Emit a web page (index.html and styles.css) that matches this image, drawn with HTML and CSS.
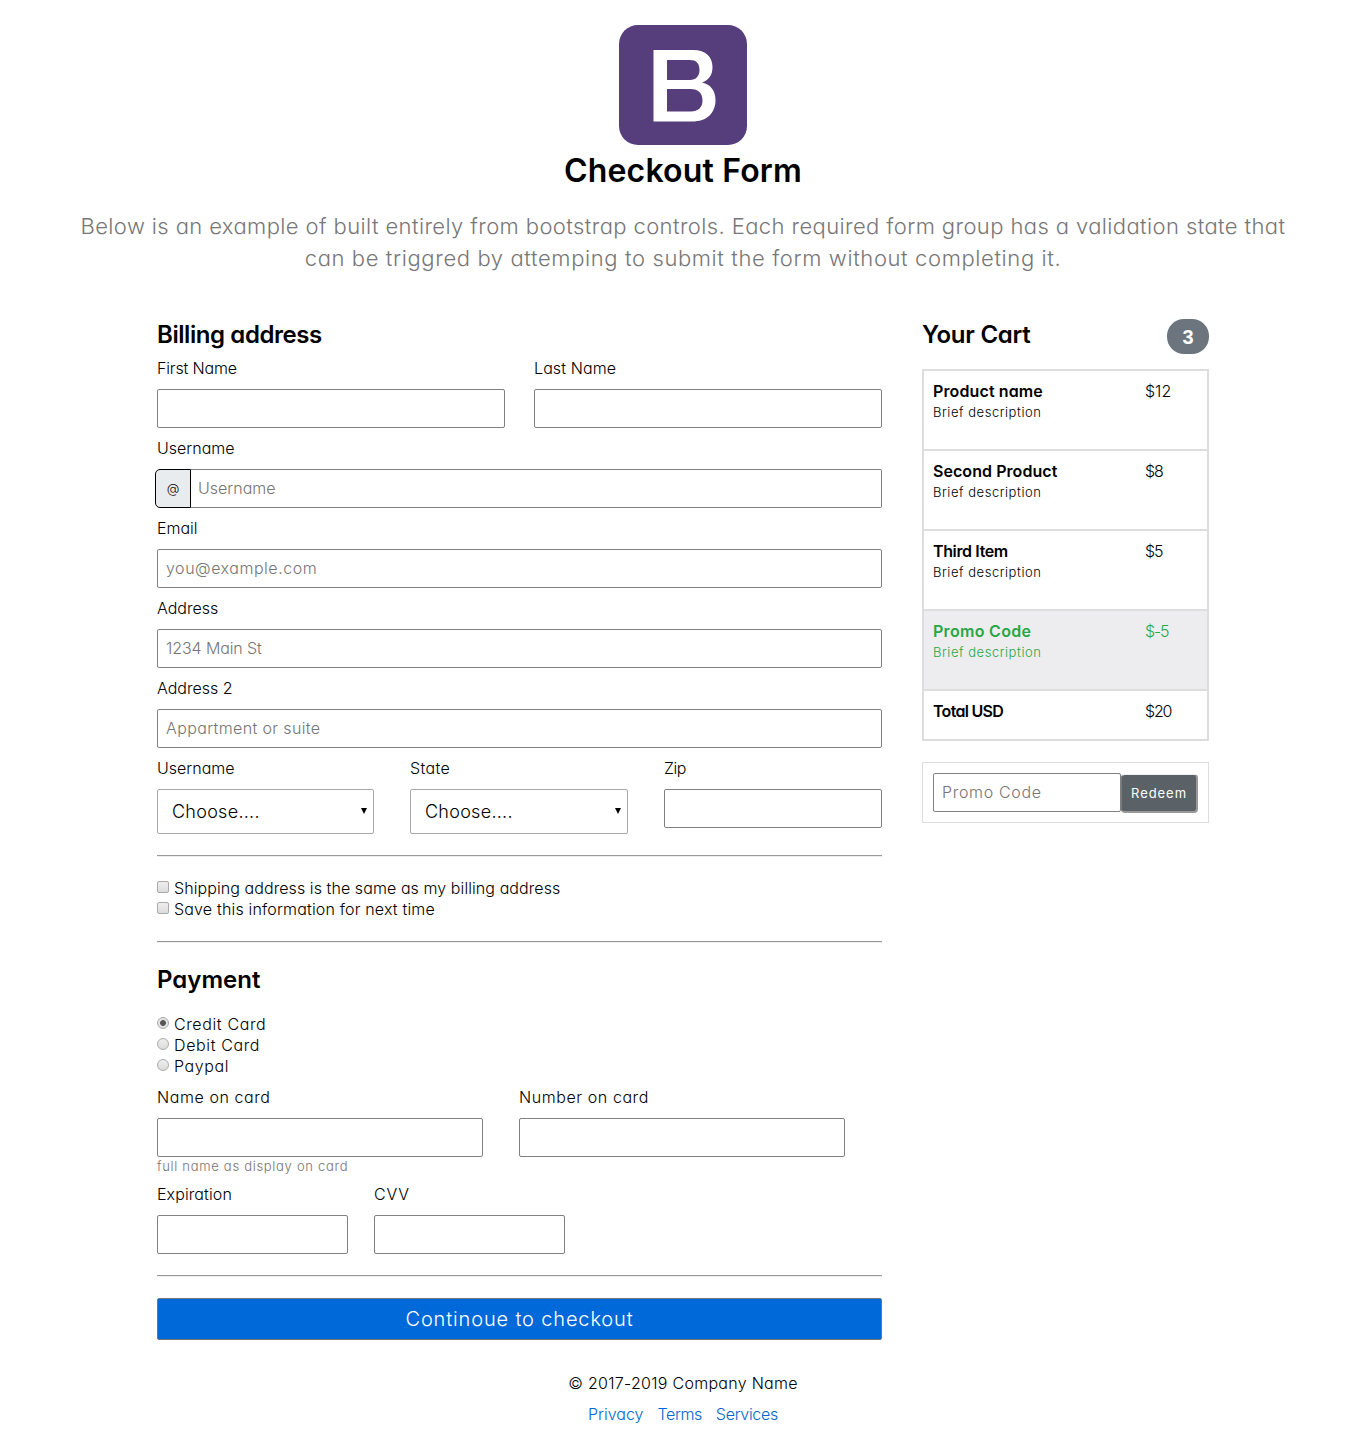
FILE: index.html
```
<!DOCTYPE html>
<html lang="en">
<head>
<meta charset="utf-8">
<title>Checkout Form</title>
<link rel="stylesheet" href="styles.css">
</head>
<body>
<header class="intro">
  <svg class="logo" width="128" height="120" viewBox="0 0 128 120">
    <rect width="128" height="120" rx="19" fill="#563d7c"/>
    <path fill="#fff" fill-rule="evenodd" d="M34.500 25H74C87 25 93.500 32 93.500 42C93.500 50 90 55 83 57.500C92 59.500 96.500 66 96.500 75C96.500 88 88 96.500 73 96.500H34.500ZM48 35V55H71C77 55 80.500 51 80.500 45C80.500 38 77 35 71 35ZM48 64V86.500H72C79 86.500 83.500 82.500 83.500 75.500C83.500 68 79 64 72 64Z"/>
  </svg>
  <h1>Checkout Form</h1>
  <p class="lead"><span class="lead-a">Below is an example of built entirely from bootstrap controls. Each required form group has a validation state that</span><br><span class="lead-b">can be triggred by attemping to submit the form without completing it.</span></p>
</header>
<main class="layout">
  <form class="billing">
    <h2 class="h-billing">Billing address</h2>
    <div class="row halves">
      <label class="field"><span class="t-first">First Name</span><input type="text"></label>
      <label class="field"><span class="t-last">Last Name</span><input type="text"></label>
    </div>
    <label class="field"><span>Username</span>
      <span class="group"><b class="at">@</b><input type="text" placeholder="Username"></span></label>
    <label class="field"><span>Email</span><input class="p-email" type="text" placeholder="you@example.com"></label>
    <label class="field"><span>Address</span><input class="p-main" type="text" placeholder="1234 Main St"></label>
    <label class="field"><span>Address 2</span><input class="p-suite" type="text" placeholder="Appartment or suite"></label>
    <div class="row thirds">
      <label class="field"><span>Username</span><span class="pick"><select><option>Choose....</option></select></span></label>
      <label class="field"><span class="t-state">State</span><span class="pick"><select><option>Choose....</option></select></span></label>
      <label class="field"><span class="t-zip">Zip</span><input type="text"></label>
    </div>
    <hr>
    <div class="options">
      <label><input type="checkbox"><span class="t-ship">Shipping address is the same as my billing address</span></label>
      <label><input type="checkbox"><span class="t-save">Save this information for next time</span></label>
    </div>
    <hr>
    <h2 class="h-payment">Payment</h2>
    <div class="options radios">
      <label><input type="radio" name="pay" checked><span>Credit Card</span></label>
      <label><input type="radio" name="pay"><span>Debit Card</span></label>
      <label><input type="radio" name="pay"><span>Paypal</span></label>
    </div>
    <div class="row cards">
      <label class="field"><span class="t-card">Name on card</span><input type="text"><small class="t-full">full name as display on card</small></label>
      <label class="field"><span class="t-card">Number on card</span><input type="text"></label>
    </div>
    <div class="row codes">
      <label class="field"><span class="t-exp">Expiration</span><input type="text"></label>
      <label class="field"><span class="t-cvv">CVV</span><input type="text"></label>
    </div>
    <hr>
    <button class="submit" type="button"><span>Continoue to checkout</span></button>
  </form>
  <aside class="cart">
    <div class="cart-head"><h2 class="h-cart">Your Cart</h2><span class="badge">3</span></div>
    <ul class="items">
      <li><div><b class="t-p1">Product name</b><small>Brief description</small></div><span class="price">$12</span></li>
      <li><div><b>Second Product</b><small>Brief description</small></div><span class="price tight">$8</span></li>
      <li><div><b class="t-p3">Third Item</b><small>Brief description</small></div><span class="price tight">$5</span></li>
      <li class="promo"><div><b class="t-p4">Promo Code</b><small>Brief description</small></div><span class="price tight">$-5</span></li>
      <li class="total"><div><b class="t-p5">Total USD</b></div><span class="price tight">$20</span></li>
    </ul>
    <div class="redeem"><input class="p-promo" type="text" placeholder="Promo Code"><button type="button">Redeem</button></div>
  </aside>
</main>
<footer>
  <p class="copy">© 2017-2019 Company Name</p>
  <nav><a>Privacy</a><a class="l2">Terms</a><a class="l3">Services</a></nav>
</footer>
</body>
</html>
```
FILE: styles.css
```
* { box-sizing: border-box; }
body {
  margin: 0;
  height: 1429px;
  overflow: hidden;
  background: #fff;
  color: #000;
  font: 300 16px/20px "Century Gothic", Inter, sans-serif;
  font-feature-settings: "cv11";
}
h1, h2, p, ul { margin: 0; padding: 0; }
.intro { padding-top: 25px; text-align: center; }
.logo { display: block; margin: 0 auto; position: relative; left: -0.5px; }
h1 { font-size: 32px; line-height: 40px; font-weight: 600; margin-top: 6px; letter-spacing: 0.17px; }
h2 { font-size: 24px; line-height: 30px; font-weight: 600; white-space: nowrap; }
.lead { margin-top: 19px; font-size: 22px; line-height: 32px; color: #777; white-space: nowrap; }
.layout { display: flex; gap: 40px; padding: 46px 0 0 157px; }
.billing { width: 725px; }
.h-billing { margin-bottom: 8px; letter-spacing: -0.42px; }
.row { display: grid; }
.halves { grid-template-columns: 348px 348px; gap: 29px; }
.thirds { grid-template-columns: 217px 218px 218px; gap: 36px; }
.cards { grid-template-columns: 326px 326px; gap: 36px; }
.codes { grid-template-columns: 191px 191px; gap: 26px; }
.field { display: flex; flex-direction: column; padding-bottom: 10px; white-space: nowrap; }
.field > span:first-child { margin-bottom: 11px; }
input, select, button { font: inherit; font-feature-settings: inherit; margin: 0; }
input[type="text"] {
  width: 100%;
  height: 39px;
  padding: 0 8px 2px;
  border: 1px solid #808080;
  border-radius: 2px;
  background: #fff;
}
::placeholder { color: #757575; opacity: 1; }
.group { display: flex; margin-left: -2px; }
.group input[type="text"] { border-left: 0; padding-left: 7px; border-radius: 0 2px 2px 0; }
.at {
  flex: none;
  width: 36px;
  height: 39px;
  border: 1px solid #000;
  border-radius: 5px 0 0 5px;
  background: #e9ecef;
  font-size: 13px;
  font-weight: 300;
  line-height: 36px;
  text-align: center;
}
.pick { position: relative; display: block; }
.pick::after {
  content: "";
  position: absolute;
  right: 7px;
  top: 19px;
  width: 6px;
  height: 6px;
  background: #000;
  clip-path: polygon(0 0, 100% 0, 50% 100%);
}
select {
  display: block;
  appearance: none;
  width: 100%;
  height: 45px;
  padding: 0 14px;
  border: 1px solid #a9a9a9;
  border-radius: 2px;
  background: #fff;
  color: #000;
  font-size: 18px;
  letter-spacing: 0.27px;
}
hr { height: 2px; margin: 0; border: 0; border-top: 1px solid #999; border-bottom: 1px solid #eee; }
.thirds + hr { margin-top: 11px; }
.options { padding: 21px 0; }
.options label { display: flex; height: 21px; white-space: nowrap; }
.options input {
  appearance: none;
  width: 12px;
  height: 12px;
  margin: 3px 5px 0 0;
  border: 1px solid #aaa;
  border-radius: 2px;
  background: linear-gradient(#eee, #dcdcdc);
}
.options input[type="radio"] { border-radius: 50%; }
.options input:checked { background: radial-gradient(circle, #555 2.5px, #e4e4e4 3.3px); }
.h-payment { margin-top: 22px; }
.options.radios { padding: 19px 0 10px; letter-spacing: 0.62px; }
.t-full { font-size: 13px; line-height: 18px; color: #757575; letter-spacing: 0.7px; }
.cards .field { padding-bottom: 9px; }
.codes + hr { margin-top: 11px; }
.submit {
  display: block;
  width: 100%;
  height: 42px;
  margin-top: 21px;
  padding: 0;
  border: 1px solid #767676;
  border-radius: 2px;
  background: #0069d9;
  color: #fff;
  font-size: 20px;
  letter-spacing: 0.85px;
}
.cart { width: 287px; }
.cart-head { display: flex; justify-content: space-between; height: 49px; }
.badge {
  width: 42px;
  height: 35px;
  margin-top: -1px;
  border-radius: 17px;
  background: #6c757d;
  color: #fff;
  font: bold 20px/36px "Liberation Sans", sans-serif;
  text-align: center;
}
.items { list-style: none; border: 2px solid #ddd; height: 372px; }
.items li { display: flex; height: 80px; padding: 10px 10px 10px 9px; border-bottom: 2px solid #ddd; }
.items div { width: 212px; }
.items b, .items small { display: block; white-space: nowrap; }
.items b { font-weight: 600; line-height: 21px; letter-spacing: 0.06px; }
.items small { font-size: 13px; line-height: 20px; letter-spacing: 0.54px; }
.items .promo { background: #ededef; color: #28a745; }
.items .total { height: 48px; border: 0; }
.price { line-height: 21px; }
.tight { letter-spacing: -1.2px; }
.redeem { display: flex; margin-top: 21px; height: 61px; border: 1px solid #ddd; padding: 10px; }
.redeem input[type="text"] { width: 188px; }
.redeem button {
  width: 78px;
  height: 39px;
  margin-top: 1px;
  padding: 0 0 1px;
  border: 2px solid;
  border-color: #eee #999 #999 #777;
  border-width: 1px 2px 2px 1px;
  border-radius: 4px;
  background: #5a6268;
  color: #fff;
  font-size: 13px;
  font-weight: 400;
  letter-spacing: 0.95px;
}
footer { text-align: center; padding-top: 33px; }
nav { display: flex; justify-content: center; gap: 14px; margin-top: 11px; color: #0066d0; }

/* Per-string tracking */
.lead-a { letter-spacing: 0.39px; }
.lead-b { letter-spacing: 0.61px; }
.h-cart { letter-spacing: -0.25px; }
.t-first { letter-spacing: -0.15px; }
.t-last { letter-spacing: 0.1px; }
.p-email { letter-spacing: 0.53px; }
.p-main { letter-spacing: -0.1px; }
.p-suite { letter-spacing: 0.37px; }
.t-state { letter-spacing: 0.35px; }
.t-zip { letter-spacing: -0.5px; }
.t-ship { letter-spacing: 0.08px; }
.t-save { letter-spacing: 0.17px; }
.t-card { letter-spacing: 0.58px; }
.t-exp { letter-spacing: 0.1px; }
.t-cvv { letter-spacing: 0.8px; }
.items .t-p1 { letter-spacing: 0.12px; }
.items .t-p3 { letter-spacing: -0.37px; }
.items .t-p4 { letter-spacing: 0.3px; }
.items .t-p5 { letter-spacing: -0.7px; }
.p-promo { letter-spacing: 0.68px; }
.copy { letter-spacing: 0.28px; }
.l2 { letter-spacing: -0.4px; }
.l3 { letter-spacing: -0.3px; }
```
